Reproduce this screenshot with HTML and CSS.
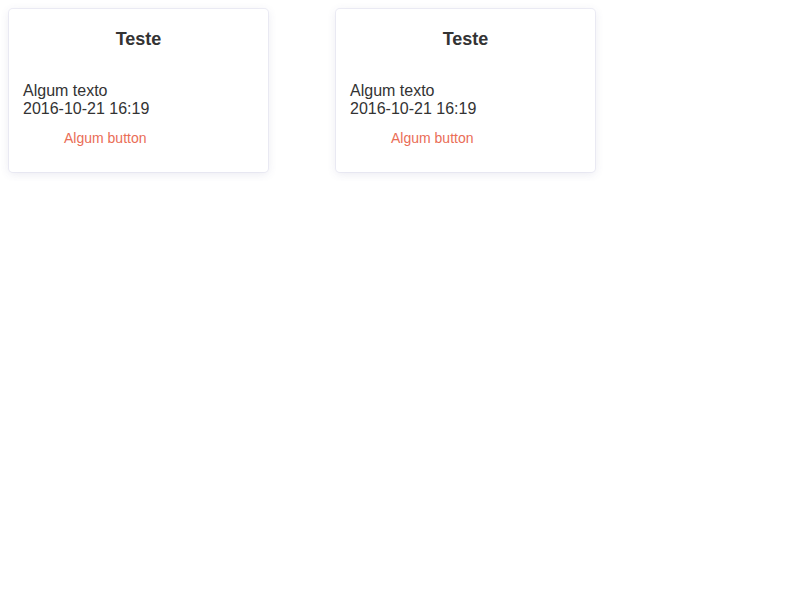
FILE: index.html
```html
<!DOCTYPE html>
<html>
<head>
<meta charset="utf-8">
<link rel="stylesheet" href="styles.css">
</head>
<body>
<div class="cards">
  <div class="card">
    <h2 class="card-title">Teste</h2>
    <div class="card-body">
      <p class="card-text">Algum texto<br>2016-10-21 16:19</p>
      <button class="card-btn">Algum button</button>
    </div>
  </div>
  <div class="card">
    <h2 class="card-title">Teste</h2>
    <div class="card-body">
      <p class="card-text">Algum texto<br>2016-10-21 16:19</p>
      <button class="card-btn">Algum button</button>
    </div>
  </div>
</div>
</body>
</html>
```
FILE: styles.css
```css
html, body {
  margin: 0;
  padding: 0;
  background: #fff;
}
body {
  padding: 9px;
  font-family: "Liberation Sans", Arial, sans-serif;
  color: #333;
}
.cards {
  display: flex;
  gap: 68px;
  align-items: flex-start;
}
.card {
  box-sizing: border-box;
  width: 259px;
  border-radius: 4px;
  background: #fff;
  box-shadow: 0 0 0 1px rgba(225, 225, 238, 0.6), 0 2px 10px rgba(70, 70, 130, 0.12);
  padding: 0 14px 23px;
}
.card-title {
  margin: 19px 0 0;
  font-size: 18px;
  font-weight: bold;
  text-align: center;
  line-height: 22px;
}
.card-body {
  margin-top: 32px;
}
.card-text {
  margin: 0;
  font-size: 16px;
  line-height: 18px;
}
.card-btn {
  display: block;
  margin: 9px 0 0 27px;
  padding: 0 14px;
  border: none;
  background: transparent;
  color: #ea6d56;
  font-family: "Liberation Sans", Arial, sans-serif;
  font-size: 14px;
  line-height: 22px;
  height: 22px;
}
```
